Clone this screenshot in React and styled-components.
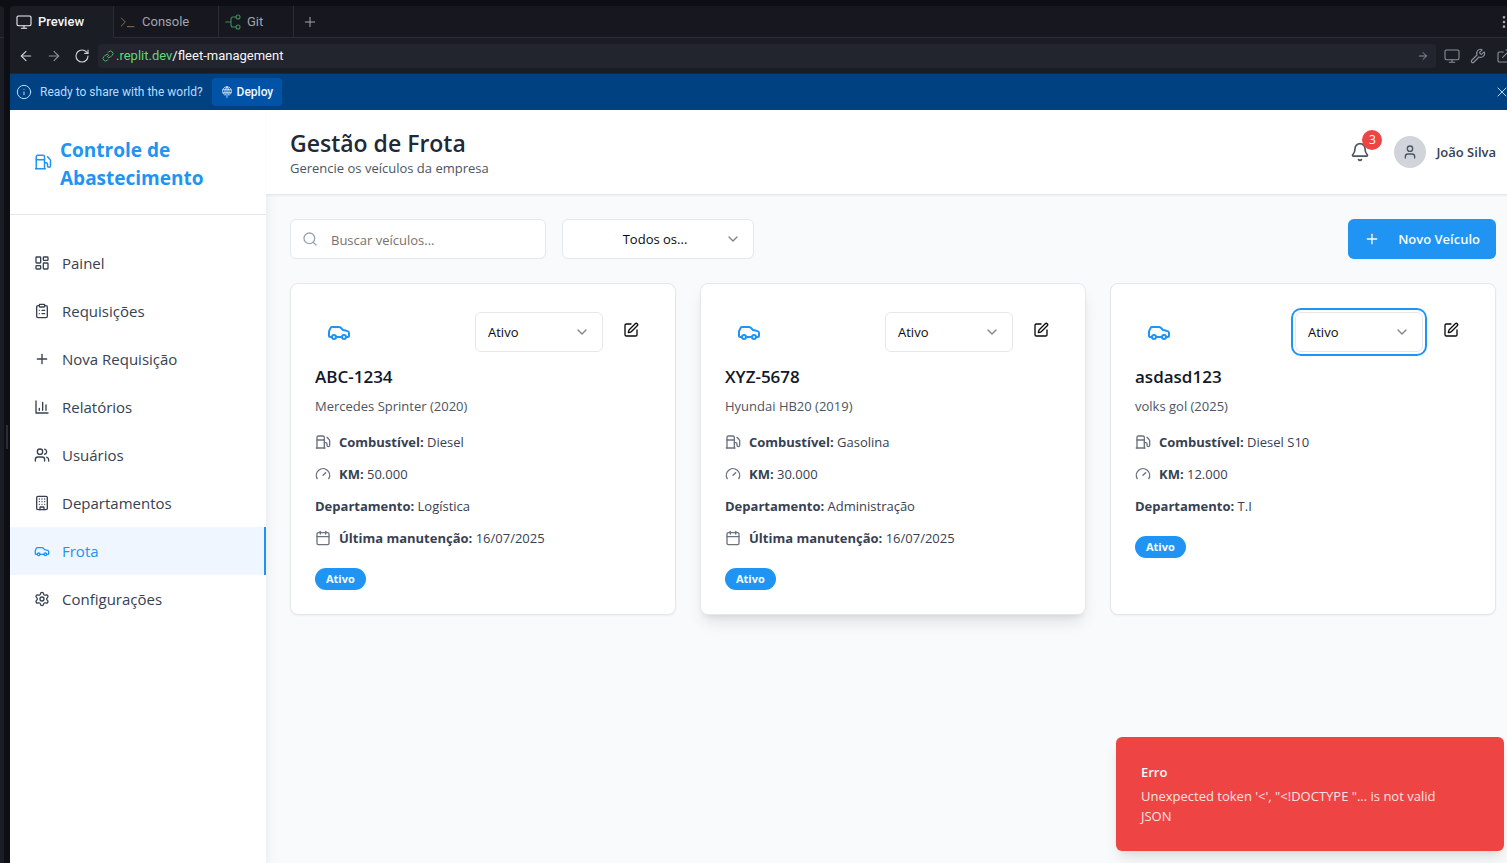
import React from "react";
import styled, { createGlobalStyle, css } from "styled-components";
import {
  Monitor, Plus, ArrowLeft, ArrowRight, RotateCw, Link, Wrench, ExternalLink,
  EllipsisVertical, Info, X, LayoutDashboard, ClipboardList, Users, Building,
  Car, Settings, Fuel, Bell, User, Search, ChevronDown, SquarePen, Calendar,
} from "lucide-react";

const blue = "#2094f3";

const Global = createGlobalStyle`
  *, *::before, *::after { box-sizing: border-box; }
  body { margin: 0; background: #0e0e15; font-family: "Open Sans", "Noto Sans", sans-serif; }
  h1, h2, h3, p, ul { margin: 0; padding: 0; }
  ul { list-style: none; }
  button, input, select { font: inherit; }
  button { cursor: pointer; border: 0; padding: 0; background: none; color: inherit; }
  a { color: inherit; text-decoration: none; }
  svg { display: block; flex: none; }
`;

/* Workspace */
const Workspace = styled.div`
  display: flex;
  gap: 6px;
  height: 100vh;
  padding-top: 6px;
  overflow: hidden;
  background: #0e0e15;
`;
const SidePane = styled.div`
  flex: none;
  width: 4px;
  border-top-right-radius: 4px;
  background: #1b1d25;
  position: relative;
  &::before {
    content: "";
    display: block;
    margin-top: 31px;
    height: 1px;
    background: #2b2d36;
  }
`;
const Grip = styled.span`
  position: absolute;
  left: 6px;
  top: 419px;
  width: 2px;
  height: 24px;
  background: #2b2d36;
`;
const Pane = styled.div`
  flex: 1;
  min-width: 0;
  margin-right: -13px;
  display: flex;
  flex-direction: column;
  border-top-left-radius: 4px;
  overflow: hidden;
  background: #1b1d25;
  font-family: Roboto, Inter, sans-serif;
`;
const Tabs = styled.div`
  display: flex;
  height: 32px;
  flex: none;
  background: #16171f;
  font-size: 13px;
`;
const Tab = styled.button`
  display: flex;
  align-items: center;
  gap: 6px;
  width: ${(p) => p.$width}px;
  padding: 0 6px;
  border-right: 1px solid #2b2d36;
  border-bottom: 1px solid ${(p) => (p.$active ? "transparent" : "#2b2d36")};
  background: ${(p) => (p.$active ? "#1b1d25" : "transparent")};
  color: ${(p) => (p.$active ? "#f5f5f8" : "#a3a4ac")};
  font-weight: ${(p) => (p.$active ? 500 : 400)};
`;
const TabsRest = styled.div`
  flex: 1;
  display: flex;
  align-items: center;
  justify-content: space-between;
  padding: 0 8px;
  border-bottom: 1px solid #2b2d36;
  color: #a3a4ac;
`;
const Toolbar = styled.div`
  display: flex;
  align-items: center;
  flex: none;
  height: 36px;
  gap: 12px;
  padding: 0 8px;
  border-bottom: 1px solid #24262f;
  color: #d0d1d8;
`;
const Tools = styled.div`
  display: flex;
  gap: 10px;
`;
const IconButton = styled.button`
  color: ${(p) => (p.$dim ? "#8d8f99" : "inherit")};
`;
const Address = styled.div`
  flex: 1;
  display: flex;
  align-items: center;
  height: 24px;
  margin: 0 -4px;
  padding: 0 7px 0 4px;
  gap: 2px;
  border-radius: 4px;
  background: #23252e;
  font-size: 13px;
  color: #f5f5f8;
`;
const Url = styled.span`
  flex: 1;
`;
const Host = styled.span`
  color: #5fd879;
`;
const Banner = styled.div`
  display: flex;
  align-items: center;
  flex: none;
  height: 36px;
  padding: 0 10px 0 6px;
  background: #004182;
  color: #b8dcff;
  font-size: 12px;
`;
const BannerText = styled.span`
  flex: 1;
  display: flex;
  align-items: center;
  gap: 8px;
`;
const Deploy = styled.button`
  display: flex;
  align-items: center;
  gap: 4px;
  height: 28px;
  margin-left: 1px;
  padding: 0 9px;
  border-radius: 4px;
  background: #0053a6;
  color: #f0f7ff;
  font-weight: 500;
`;

/* Application */
const Frame = styled.div`
  flex: 1;
  min-height: 0;
  display: flex;
  position: relative;
  background: #f9fafb;
  font-family: "Open Sans", "Noto Sans", sans-serif;
  font-size: 13px;
  line-height: 20px;
`;
const Sidebar = styled.aside`
  flex: none;
  width: 256px;
  background: #fff;
  box-shadow: 0 10px 15px -3px rgba(0, 0, 0, 0.1), 0 4px 6px -4px rgba(0, 0, 0, 0.1);
`;
const Brand = styled.div`
  display: flex;
  align-items: center;
  gap: 8px;
  padding: 24px;
  border-bottom: 1px solid #e5e7eb;
  color: ${blue};
`;
const BrandName = styled.h1`
  padding-top: 2px;
  margin-bottom: -2px;
  font-size: 19px;
  line-height: 28px;
  font-weight: 700;
`;
const Nav = styled.nav`
  padding-top: 24px;
`;
const NavLink = styled.a`
  display: flex;
  align-items: center;
  gap: 12px;
  height: 48px;
  padding: 0 24px;
  font-size: 15px;
  color: #374151;
  ${(p) => p.$active && css`
    color: ${blue};
    background: #eff6ff;
    border-right: 2px solid ${blue};
  `}
`;
const Main = styled.main`
  flex: 1;
  min-width: 0;
`;
const Header = styled.header`
  display: flex;
  justify-content: space-between;
  align-items: center;
  padding: 16px 24px;
  background: #fff;
  border-bottom: 1px solid #e5e7eb;
  box-shadow: 0 1px 2px rgba(0, 0, 0, 0.05);
`;
const PageTitle = styled.h2`
  padding-top: 2px;
  font-size: 23px;
  line-height: 30px;
  font-weight: 600;
  color: #1f2937;
`;
const Subtitle = styled.p`
  color: #4b5563;
`;
const Account = styled.div`
  display: flex;
  align-items: center;
  gap: 24px;
  color: #374151;
  font-weight: 600;
`;
const BellButton = styled.button`
  position: relative;
  color: #4b5563;
`;
const Count = styled.span`
  position: absolute;
  top: -12px;
  right: -12px;
  width: 20px;
  height: 20px;
  border-radius: 50%;
  background: #ef4444;
  color: #fff;
  font-size: 12px;
  font-weight: 400;
  line-height: 20px;
  text-align: center;
`;
const Profile = styled.div`
  display: flex;
  align-items: center;
  gap: 10px;
`;
const Avatar = styled.span`
  display: grid;
  place-items: center;
  width: 32px;
  height: 32px;
  border-radius: 50%;
  background: #d1d5db;
  color: #4b5563;
`;
const Content = styled.div`
  padding: 24px;
`;
const Filters = styled.div`
  display: flex;
  gap: 16px;
  margin-bottom: 24px;
`;
const SearchBox = styled.label`
  display: flex;
  align-items: center;
  gap: 12px;
  width: 256px;
  height: 40px;
  padding: 0 11px;
  border: 1px solid #e5e7eb;
  border-radius: 6px;
  background: #fff;
  color: #9ca3af;
`;
const SearchInput = styled.input`
  flex: 1;
  min-width: 0;
  border: 0;
  padding: 2px 0 0 1px;
  outline: 0;
  background: transparent;
  color: #0c0a09;
  &::placeholder { color: #78716c; opacity: 1; }
`;
const SelectWrap = styled.div`
  display: grid;
  align-items: center;
  width: ${(p) => p.$width}px;
  height: 40px;
  > * { grid-area: 1 / 1; }
  > svg {
    justify-self: end;
    margin-right: 13px;
    color: #858381;
    pointer-events: none;
  }
`;
const Select = styled.select`
  appearance: none;
  width: 100%;
  height: 40px;
  padding: ${(p) => (p.$centered ? "0 46px 0 40px" : "0 32px 0 12px")};
  text-align-last: ${(p) => (p.$centered ? "center" : "left")};
  border: 1px solid #e5e7eb;
  border-radius: 6px;
  outline: 0;
  background: #fff;
  color: #0c0a09;
  box-shadow: ${(p) => (p.$focused ? `0 0 0 2px #fff, 0 0 0 4px ${blue}` : "none")};
`;
const PrimaryButton = styled.button`
  display: flex;
  align-items: center;
  gap: 18px;
  height: 40px;
  margin-left: auto;
  padding: 0 16px;
  border-radius: 6px;
  background: ${blue};
  color: #f8fbff;
  font-weight: 600;
`;
const Cards = styled.div`
  display: grid;
  grid-template-columns: repeat(3, minmax(0, 1fr));
  gap: 24px;
`;
const Card = styled.article`
  padding: 24px;
  border: 1px solid #e5e7eb;
  border-radius: 8px;
  background: #fff;
  color: #374151;
  box-shadow: ${(p) => (p.$raised
    ? "0 10px 15px -3px rgba(0,0,0,0.1), 0 4px 6px -4px rgba(0,0,0,0.1)"
    : "0 1px 2px rgba(0,0,0,0.05)")};
`;
const CardTop = styled.div`
  display: flex;
  align-items: center;
  justify-content: space-between;
`;
const CarBadge = styled.span`
  padding: 12px;
  color: ${blue};
`;
const Actions = styled.div`
  display: flex;
  gap: 8px;
`;
const EditButton = styled.button`
  display: grid;
  place-items: center;
  width: 40px;
  height: 36px;
  color: #0c0a09;
`;
const Plate = styled.h3`
  margin-top: 7px;
  font-size: 17px;
  line-height: 28px;
  font-weight: 600;
  color: #111827;
`;
const Model = styled.p`
  margin: 5px 0 16px;
  color: #4b5563;
`;
const Facts = styled.ul`
  display: grid;
  gap: 12px;
`;
const Fact = styled.li`
  display: flex;
  align-items: center;
  gap: 8px;
  > svg { color: #6b7280; }
`;
const Status = styled.span`
  display: inline-block;
  height: 22px;
  margin-top: 20px;
  padding: 0 11px;
  border-radius: 11px;
  background: ${blue};
  color: #f8fbff;
  font-size: 11px;
  font-weight: 700;
  line-height: 22px;
  vertical-align: top;
`;
const Toast = styled.div`
  position: absolute;
  right: 16px;
  bottom: 12px;
  width: 388px;
  padding: 25px 48px 25px 25px;
  border-radius: 6px;
  background: #ef4444;
  color: #fde3e3;
  font-weight: 500;
  box-shadow: 0 10px 15px -3px rgba(0, 0, 0, 0.1), 0 4px 6px -4px rgba(0, 0, 0, 0.1);
`;
const ToastTitle = styled.p`
  margin-bottom: 4px;
  color: #fafafa;
  font-weight: 600;
`;

/* Icons */
const Svg = ({ size = 16, children, ...rest }) => (
  <svg width={size} height={size} viewBox="0 0 24 24" fill="none" stroke="currentColor"
    strokeWidth="2" strokeLinecap="round" strokeLinejoin="round" {...rest}>
    {children}
  </svg>
);
const ChartIcon = (p) => (
  <Svg {...p}><path d="M3 3v18h18M18 17V9M13 17V5M8 17v-3" /></Svg>
);
const GaugeIcon = (p) => (
  <Svg {...p}><path d="m12 14 4-4M3.34 19a10 10 0 1 1 17.32 0" /></Svg>
);
const PromptIcon = (p) => (
  <Svg {...p} stroke="#84754a" strokeWidth="1.5"><path d="m2 6 6 6-6 6M11 19h10" /></Svg>
);
const BranchIcon = (p) => (
  <Svg {...p} stroke="#3f8a55" strokeWidth="1.7">
    <path d="M1 12h8M16.5 4.5H12a3 3 0 0 0-3 3v9a3 3 0 0 0 3 3h4.5" />
    <circle cx="19.5" cy="4.5" r="3" /><circle cx="19.5" cy="19.5" r="3" />
  </Svg>
);
const ScreenIcon = (p) => (
  <Svg {...p} strokeWidth="1.6">
    <rect x="1.5" y="3" width="21" height="14.5" rx="2" />
    <path d="M12 17.5V21M8 21.5h8" />
  </Svg>
);
const DeployIcon = (p) => (
  <Svg {...p} strokeWidth="1.5">
    <path d="M7 18a9 9 0 1 1 10 0M12 1.5V23M9 18C6.500 12 7.500 5 12 1.500c4.500 3.500 5.500 10.500 3 16.500M4 7.500h16M4 13.500h16" />
  </Svg>
);

const navItems = [
  ["Painel", LayoutDashboard],
  ["Requisições", ClipboardList],
  ["Nova Requisição", Plus],
  ["Relatórios", ChartIcon],
  ["Usuários", Users],
  ["Departamentos", Building],
  ["Frota", Car],
  ["Configurações", Settings],
];

const vehicles = [
  { plate: "ABC-1234", model: "Mercedes Sprinter (2020)", fuel: "Diesel", km: "50.000", dept: "Logística", service: "16/07/2025" },
  { plate: "XYZ-5678", model: "Hyundai HB20 (2019)", fuel: "Gasolina", km: "30.000", dept: "Administração", service: "16/07/2025", raised: true },
  { plate: "asdasd123", model: "volks gol (2025)", fuel: "Diesel S10", km: "12.000", dept: "T.I", focused: true },
];

function VehicleCard({ v }) {
  return (
    <Card $raised={v.raised}>
      <CardTop>
        <CarBadge><Car size={24} /></CarBadge>
        <Actions>
          <SelectWrap $width={128}>
            <Select aria-label={`Status de ${v.plate}`} defaultValue="Ativo" $focused={v.focused}>
              <option>Ativo</option>
            </Select>
            <ChevronDown size={16} />
          </SelectWrap>
          <EditButton aria-label={`Editar ${v.plate}`}><SquarePen size={16} /></EditButton>
        </Actions>
      </CardTop>
      <Plate>{v.plate}</Plate>
      <Model>{v.model}</Model>
      <Facts>
        <Fact><Fuel size={16} /><span><strong>Combustível:</strong> {v.fuel}</span></Fact>
        <Fact><GaugeIcon /><span><strong>KM:</strong> {v.km}</span></Fact>
        <Fact><span><strong>Departamento:</strong> {v.dept}</span></Fact>
        {v.service && (
          <Fact><Calendar size={16} /><span><strong>Última manutenção:</strong> {v.service}</span></Fact>
        )}
      </Facts>
      <Status>Ativo</Status>
    </Card>
  );
}

export default function App() {
  return (
    <>
      <Global />
      <Workspace>
        <SidePane><Grip /></SidePane>
        <Pane>
          <Tabs>
            <Tab $width={104} $active><ScreenIcon />Preview</Tab>
            <Tab $width={105}><PromptIcon />Console</Tab>
            <Tab $width={75}><BranchIcon />Git</Tab>
            <TabsRest>
              <IconButton aria-label="Nova aba"><Plus size={16} strokeWidth={1.5} /></IconButton>
              <IconButton aria-label="Mais"><EllipsisVertical size={16} /></IconButton>
            </TabsRest>
          </Tabs>
          <Toolbar>
            <IconButton aria-label="Voltar"><ArrowLeft size={16} strokeWidth={1.7} /></IconButton>
            <IconButton aria-label="Avançar" $dim><ArrowRight size={16} strokeWidth={1.7} /></IconButton>
            <IconButton aria-label="Recarregar"><RotateCw size={16} strokeWidth={1.7} /></IconButton>
            <Address>
              <Link size={12} color="#5fd879" strokeWidth={1.5} />
              <Url><Host>.replit.dev</Host>/fleet-management</Url>
              <IconButton aria-label="Ir" $dim><ArrowRight size={12} /></IconButton>
            </Address>
            <Tools>
              <IconButton aria-label="Dispositivo" $dim><ScreenIcon /></IconButton>
              <IconButton aria-label="Ferramentas" $dim><Wrench size={16} strokeWidth={1.7} /></IconButton>
              <IconButton aria-label="Abrir em nova aba" $dim><ExternalLink size={16} strokeWidth={1.7} /></IconButton>
            </Tools>
          </Toolbar>
          <Banner>
            <BannerText>
              <Info size={16} strokeWidth={1.5} />
              Ready to share with the world?
              <Deploy><DeployIcon size={12} />Deploy</Deploy>
            </BannerText>
            <IconButton aria-label="Fechar"><X size={16} strokeWidth={1.5} /></IconButton>
          </Banner>
          <Frame>
            <Sidebar>
              <Brand>
                <Fuel size={18} />
                <BrandName>Controle de Abastecimento</BrandName>
              </Brand>
              <Nav>
                {navItems.map(([label, Icon]) => (
                  <NavLink key={label} href="#" $active={label === "Frota"}>
                    <Icon size={16} />{label}
                  </NavLink>
                ))}
              </Nav>
            </Sidebar>
            <Main>
              <Header>
                <div>
                  <PageTitle>Gestão de Frota</PageTitle>
                  <Subtitle>Gerencie os veículos da empresa</Subtitle>
                </div>
                <Account>
                  <BellButton aria-label="Notificações"><Bell size={20} /><Count>3</Count></BellButton>
                  <Profile><Avatar><User size={16} /></Avatar>João Silva</Profile>
                </Account>
              </Header>
              <Content>
                <Filters>
                  <SearchBox>
                    <Search size={16} />
                    <SearchInput aria-label="Buscar veículos" placeholder="Buscar veículos..." />
                  </SearchBox>
                  <SelectWrap $width={192}>
                    <Select aria-label="Filtrar por status" $centered>
                      <option>Todos os...</option>
                    </Select>
                    <ChevronDown size={16} />
                  </SelectWrap>
                  <PrimaryButton><Plus size={16} />Novo Veículo</PrimaryButton>
                </Filters>
                <Cards>
                  {vehicles.map((v) => <VehicleCard key={v.plate} v={v} />)}
                </Cards>
              </Content>
            </Main>
            <Toast role="alert">
              <ToastTitle>Erro</ToastTitle>
              <p>{"Unexpected token '<', \"<!DOCTYPE \"... is not valid JSON"}</p>
            </Toast>
          </Frame>
        </Pane>
      </Workspace>
    </>
  );
}
